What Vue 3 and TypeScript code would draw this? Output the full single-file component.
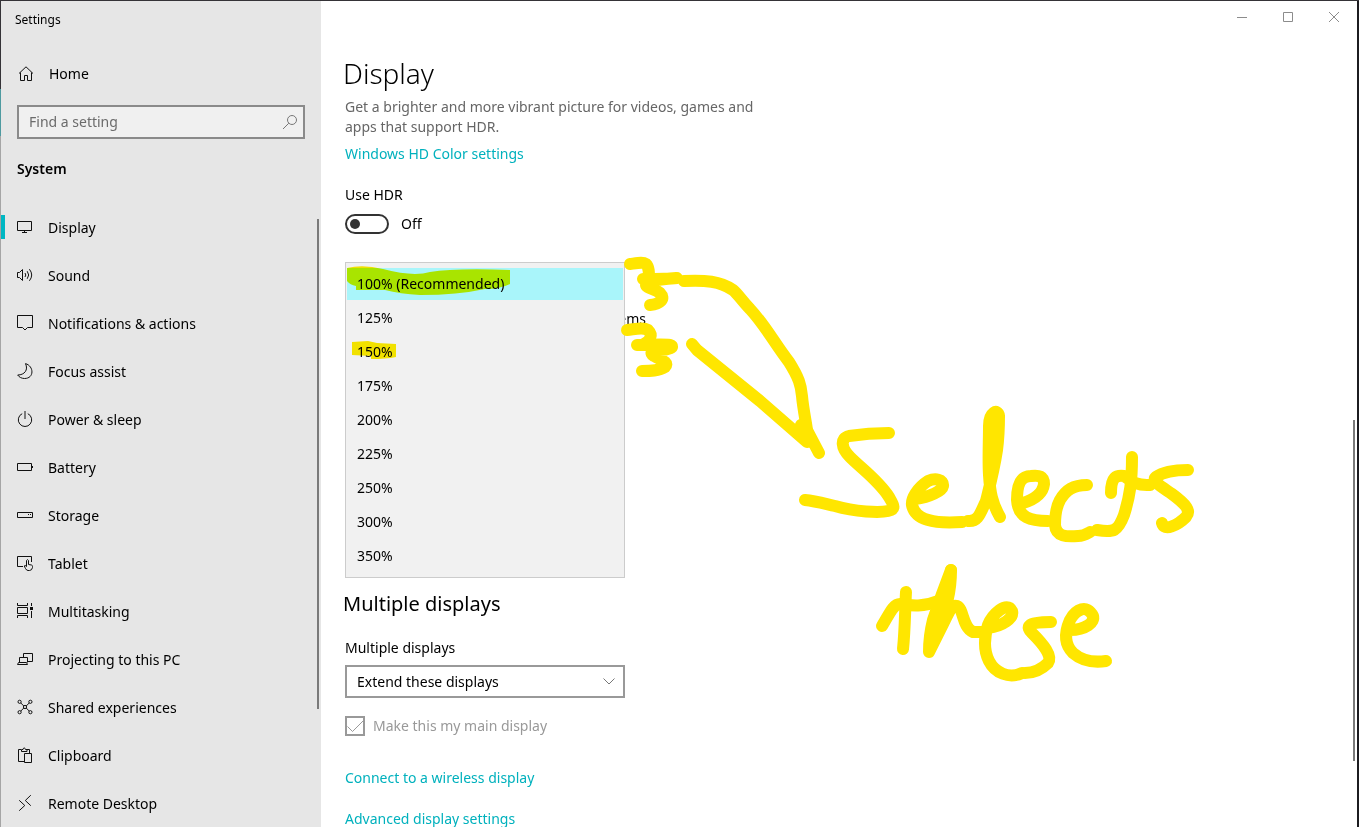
<script setup lang="ts">
import { ref } from 'vue'

interface NavItem {
  label: string
  paths: string[]
  fills?: string[]
}

const navItems: NavItem[] = [
  { label: 'Display', paths: ['M.5 1.5h14v9H.5zM7.5 11v2M5 12.5h5'] },
  {
    label: 'Sound',
    paths: [
      'M.5 4.5h2L5.5 1.5v11L2.5 9.5h-2z',
      'M8 5q1.6 2 0 4M10.2 3.2q3 3.8 0 7.6M12.4 1.2q4.6 5.8 0 11.6'
    ]
  },
  { label: 'Notifications & actions', paths: ['M.5-.5h15v12h-5l-2.500 2.500-2.500-2.500h-5z'] },
  { label: 'Focus assist', paths: ['M8.500-.4C17 2 17.500 14.500 7.500 14.500 4.500 14.500 2 13 .7 11 7.500 11 11.500 6 8.500-.4z'] },
  { label: 'Power & sleep', paths: ['M5.200 1.700a6.700 6.700 0 1 0 5.600 0', 'M8-1v8'] },
  { label: 'Battery', paths: ['M.5 3.500h14v7H.5zM15.500 6v2'] },
  { label: 'Storage', paths: ['M.5 4.500h15v5H.5z'], fills: ['M11 6h1v1h-1zM13 6h1v1h-1z'] },
  {
    label: 'Tablet',
    paths: [
      'M6 10.500H.5V.5h14V6',
      'M9.500 10.500V4.500q1-1.800 2 0v4l3 .5q1 .3 1 1.500v1q-.6 3-3 3h-1.500q-1.500 0-2.500-2l-1.300-2.500q.6-1.500 2.300 .5z'
    ]
  },
  {
    label: 'Multitasking',
    paths: ['M.5-1v2.500h10V-1M.5 3.500h10v6H.5zM.5 14v-2.500h10V14M14.500-1v3M14.500 7v7'],
    fills: ['M13 3h3v3h-3z']
  },
  { label: 'Projecting to this PC', paths: ['M6.500 5V1.500h9v8h-5M2.500 10.500v-5h8v5M1.500 10.500h8l1 2H.5z'] },
  {
    label: 'Shared experiences',
    paths: [
      'M1 1.800a1.600 1.600 0 1 0 3.200 0a1.600 1.600 0 1 0-3.200 0M11.800 1.800a1.600 1.600 0 1 0 3.200 0a1.600 1.600 0 1 0-3.200 0M1 12.200a1.600 1.600 0 1 0 3.200 0a1.600 1.600 0 1 0-3.200 0M11.800 12.200a1.600 1.600 0 1 0 3.200 0a1.600 1.600 0 1 0-3.200 0M6.400 7a1.600 1.600 0 1 0 3.200 0a1.600 1.600 0 1 0-3.200 0',
      'M3.800 3l3 3M12.200 3l-3 3M3.800 11l3-3M12.200 11l-3-3'
    ]
  },
  {
    label: 'Clipboard',
    paths: ['M7 13.500H1.500v-12H4M10 1.500h2.500V5M4.500 3.500v-2h1.500q1-3.500 2.500 0H10v2zM7.500 5.500h7v9h-7z']
  },
  { label: 'Remote Desktop', paths: ['M2.200 4.300l5.600 5.200-5.600 5.200M13.800-.8L8.300 4.500l5.500 5.200'] }
]

const activeItem = ref('Display')
const search = ref('')
const hdr = ref(false)
const scales = ['100% (Recommended)', '125%', '150%', '175%', '200%', '225%', '250%', '300%', '350%']
const scale = ref(scales[0])
const displayModes = ['Extend these displays', 'Duplicate these displays', 'Disconnect this display']
const displayMode = ref(displayModes[0])

const inkStrokes: string[] = [
  'M630 264C638 263 643 262 646 264C649 267 649 272 649 279',
  'M643 279C655 279 668 279 677 278C664 279 650 280 646 285C646 288 655 289 660 293C666 299 660 304 650 305',
  'M684 281C705 280 720 281 733 290C738 294 742 301 750 309C765 325 775 344 789 362C799 378 801 385 802 396C803 408 806 422 807 430',
  'M692 344L697 350L760 401L807 442L801 425L808 432L819 453',
  'M627 330C636 329 643 327 648 330C653 335 651 341 642 345',
  'M637 345C650 345 663 344 670 345C676 347 668 350 660 350C652 350 649 353 654 356C664 361 669 363 665 367C659 371 650 371 642 371',
  'M889 433C875 433 862 434 849 436C840 438 841 448 850 457C862 469 879 481 889 497C893 504 897 509 888 511C880 513 855 512 835 506C822 503 815 501 805 500',
  'M915 499C930 497 942 491 943 486C944 479 935 478 928 481C917 488 911 499 912 505C915 520 933 524 962 522',
  'M968 521C978 522 980 514 986 501C990 485 994 470 997 450C999 435 999 425 999 416C998 408 989 412 989 426C989 442 988 459 989 475C990 492 992 503 1000 517',
  'M1023 503C1036 499 1043 492 1044 484C1044 476 1039 475 1031 476C1020 476 1017 485 1017 500C1018 518 1031 521 1048 521',
  'M1087 485C1073 485 1066 490 1060 500C1055 509 1055 519 1055 525C1056 537 1067 537 1078 536C1085 536 1088 533 1090 532',
  'M1097 530C1114 533 1118 531 1124 515C1130 496 1132 481 1132 457',
  'M1111 493C1111 477 1116 475 1124 476C1130 480 1135 486 1150 485',
  'M1188 470C1173 470 1163 472 1156 477C1151 481 1162 487 1172 494C1187 505 1191 511 1186 517C1178 525 1164 532 1162 523',
  'M882 626C889 615 893 604 900 604C912 606 924 607 938 601',
  'M906 592C905 610 905 630 903 649',
  'M951 570C944 588 938 605 933 620C930 632 929 642 929 652L943 624C948 615 951 604 957 606C964 609 962 627 973 632L983 632',
  'M951 570C951 591 947 608 936 631',
  'M988 628C1003 626 1014 618 1012 611C1007 600 992 615 988 625C984 638 984 651 989 661C995 673 1009 679 1022 673',
  'M1025 673C1036 673 1043 668 1048 663C1053 656 1043 644 1032 633C1026 627 1026 622 1051 622',
  'M1070 630C1086 630 1095 622 1093 616C1087 604 1076 609 1070 620C1063 636 1066 646 1073 653C1081 660 1092 663 1106 661'
]
</script>

<template>
  <div class="window">
    <aside class="sidebar">
      <div class="window-title">Settings</div>
      <button class="home" type="button">
        <svg class="icon" viewBox="0 0 16 16" aria-hidden="true">
          <path d="M1 7.500L8 .8l7 6.700M2.500 6.500v8h4v-5h3v5h4v-8" />
        </svg>
        <span>Home</span>
      </button>
      <div class="search">
        <input v-model="search" type="text" placeholder="Find a setting" aria-label="Find a setting" />
        <svg class="icon search-icon" viewBox="0 0 16 16" aria-hidden="true">
          <path d="M5.500 6a4.500 4.500 0 1 0 9 0a4.500 4.500 0 1 0-9 0M6.800 9.200L1 15" />
        </svg>
      </div>
      <h2 class="group">System</h2>
      <nav class="nav" aria-label="System">
        <button
          v-for="item in navItems"
          :key="item.label"
          type="button"
          class="nav-item"
          :class="{ active: item.label === activeItem }"
          @click="activeItem = item.label"
        >
          <svg class="icon" viewBox="0 0 16 16" aria-hidden="true">
            <path v-for="d in item.paths" :key="d" :d="d" />
            <path v-for="d in item.fills" :key="d" :d="d" class="solid" />
          </svg>
          <span>{{ item.label }}</span>
        </button>
        <div class="nav-thumb"></div>
      </nav>
    </aside>

    <main class="main">
      <div class="controls">
        <button type="button" aria-label="Minimize">
          <svg viewBox="0 0 10 10"><path d="M0 5.500h10" /></svg>
        </button>
        <button type="button" aria-label="Maximize">
          <svg viewBox="0 0 10 10"><path d="M.5.5h9v9h-9z" /></svg>
        </button>
        <button type="button" aria-label="Close">
          <svg viewBox="0 0 10 10"><path d="M0 0l10 10M10 0L0 10" /></svg>
        </button>
      </div>

      <div class="content">
        <h1>Display</h1>
        <p class="intro">Get a brighter and more vibrant picture for videos, games and apps that support HDR.</p>
        <a class="link" href="#hd-color">Windows HD Color settings</a>

        <label class="hdr-label" for="hdr">Use HDR</label>
        <div class="switch-row">
          <input id="hdr" v-model="hdr" class="switch" type="checkbox" role="switch" />
          <span>{{ hdr ? 'On' : 'Off' }}</span>
        </div>

        <div class="scale">
          <label for="scale">Change the size of text, apps, and other items</label>
          <select id="scale" v-model="scale" class="scale-list" size="9">
            <option v-for="s in scales" :key="s" :value="s">{{ s }}</option>
          </select>
        </div>

        <h2 class="section">Multiple displays</h2>
        <label class="field-label" for="mode">Multiple displays</label>
        <div class="combo">
          <select id="mode" v-model="displayMode">
            <option v-for="m in displayModes" :key="m" :value="m">{{ m }}</option>
          </select>
          <svg viewBox="0 0 12 7" aria-hidden="true"><path d="M.5.5L6 6l5.500-5.500" /></svg>
        </div>
        <label class="check">
          <input type="checkbox" checked disabled />
          <svg viewBox="0 0 20 20" aria-hidden="true"><path d="M2.500 10.500l5 5L18 5" /></svg>
          <span>Make this my main display</span>
        </label>
        <a class="link wireless" href="#wireless">Connect to a wireless display</a>
        <a class="link" href="#advanced">Advanced display settings</a>
      </div>
      <div class="main-thumb"></div>
    </main>

    <svg class="overlay highlighter" viewBox="0 0 1359 827" aria-hidden="true">
      <path d="M347 268Q363 264 383 269Q413 277 430 272Q455 268 510 270V284Q500 289 485 289Q458 295 420 295Q400 294 385 290L356 290V286Q350 285 347 281z" />
      <path d="M352 342L368 341L377 343L396 344V357Q386 359 371 359V356L352 355z" />
    </svg>
    <svg class="overlay ink" viewBox="0 0 1359 827" role="img" aria-label="Selects these">
      <path v-for="d in inkStrokes" :key="d" :d="d" />
    </svg>
  </div>
</template>

<style>
body {
  margin: 0;
  overflow: hidden;
}
</style>

<style scoped>
.window {
  position: relative;
  box-sizing: border-box;
  display: flex;
  height: 100vh;
  overflow: hidden;
  padding: 1px 2px 0 1px;
  background: linear-gradient(#353337, #353337) top / 100% 1px no-repeat,
    linear-gradient(#1c1c20, #1c1c20) right / 2px 100% no-repeat,
    linear-gradient(#353337 89px, #4e9aa0 89px, #4e9aa0 136px, #a5a5a5 136px);
  color: #000;
  font: 14px/20px "Noto Sans", "Open Sans", sans-serif;
}
button,
input,
select {
  font: inherit;
  color: inherit;
}
h1,
h2,
p {
  margin: 0;
}
.sidebar {
  flex: 0 0 320px;
  display: flex;
  flex-direction: column;
  background: #e6e6e6;
}
.window-title {
  padding: 9px 14px 0;
  font-size: 12px;
}
.home,
.nav-item {
  display: flex;
  align-items: center;
  flex: none;
  border: 0;
  background: none;
  text-align: left;
}
.home {
  gap: 15px;
  height: 40px;
  margin-top: 24px;
  padding: 0 17px;
}
.icon {
  flex: none;
  width: 16px;
  height: 16px;
  overflow: visible;
  fill: none;
  stroke: #111;
  stroke-width: 1px;
}
.icon .solid {
  fill: #111;
  stroke: none;
}
.search {
  display: flex;
  align-items: center;
  box-sizing: border-box;
  flex: 0 0 34px;
  margin: 11px 16px 0;
  padding: 0 5px 0 10px;
  border: 2px solid #8a8a8a;
  background: #f0f0f0;
}
.search input {
  flex: 1;
  min-width: 0;
  padding: 0;
  border: 0;
  outline: 0;
  background: none;
}
.search input::placeholder {
  color: #6b6b6b;
  opacity: 1;
}
.search .search-icon {
  stroke: #777;
}
.group {
  margin: 20px 16px 0;
  font-size: 14px;
  line-height: 20px;
  font-weight: 600;
}
.nav {
  position: relative;
  display: flex;
  flex-direction: column;
  margin-top: 25px;
}
.nav-item {
  position: relative;
  gap: 15px;
  height: 48px;
  padding: 0 16px;
}
.nav-item.active::before {
  content: "";
  position: absolute;
  left: 0;
  top: 11px;
  width: 4px;
  height: 24px;
  background: #00b7c3;
}
.nav-thumb {
  position: absolute;
  right: 2px;
  top: 15px;
  width: 2px;
  height: 490px;
  background: #7a7a7a;
}
.main {
  position: relative;
  flex: 1;
  min-width: 0;
  background: #fff;
}
.controls {
  display: flex;
  justify-content: flex-end;
}
.controls button {
  display: grid;
  place-items: center;
  width: 46px;
  height: 32px;
  padding: 0;
  border: 0;
  background: none;
}
.controls svg {
  width: 10px;
  height: 10px;
  fill: none;
  stroke: #8c8c8c;
}
.content {
  display: flex;
  flex-direction: column;
  align-items: flex-start;
  max-width: 424px;
  padding-left: 24px;
}
h1 {
  margin: 20px 0 0 -2px;
  font-size: 28px;
  line-height: 40px;
  font-weight: 300;
}
.intro {
  margin-top: 4px;
  color: #666;
}
.link {
  margin-top: 7px;
  color: #00b1bd;
  text-decoration: none;
}
.hdr-label {
  margin-top: 21px;
}
.switch-row {
  display: flex;
  align-items: center;
  gap: 12px;
  margin-top: 9px;
}
.switch {
  appearance: none;
  display: flex;
  align-items: center;
  box-sizing: border-box;
  width: 44px;
  height: 20px;
  margin: 0;
  padding: 0 3px;
  border: 2px solid #333;
  border-radius: 10px;
}
.switch::before {
  content: "";
  width: 10px;
  height: 10px;
  border-radius: 50%;
  background: #333;
}
.switch:checked {
  justify-content: flex-end;
}
.scale {
  position: relative;
  box-sizing: border-box;
  width: 280px;
  height: 316px;
  margin-top: 28px;
  padding-top: 47px;
  white-space: nowrap;
}
.scale-list {
  appearance: none;
  position: absolute;
  inset: 0;
  box-sizing: border-box;
  width: 100%;
  height: 100%;
  margin: 0;
  padding: 5px 1px 0;
  overflow: hidden;
  border: 1px solid #ccc;
  border-radius: 0;
  outline: 0;
  background: #f1f1f1;
}
.scale-list option {
  min-height: 20px;
  margin-bottom: 2px;
  padding: 6px 10px;
  line-height: 20px;
  color: #000;
}
.scale-list option:checked {
  background: linear-gradient(#a9f5fa, #a9f5fa);
  color: #000;
}
.section {
  margin: 12px 0 0 -2px;
  font-size: 20px;
  line-height: 28px;
  font-weight: 400;
}
.field-label {
  margin-top: 20px;
}
.combo {
  position: relative;
  width: 280px;
  margin-top: 7px;
}
.combo select {
  appearance: none;
  box-sizing: border-box;
  width: 100%;
  height: 33px;
  padding: 0 10px;
  border: 2px solid #999;
  border-radius: 0;
  background: #fff;
}
.combo svg {
  position: absolute;
  right: 10px;
  top: 13px;
  width: 12px;
  height: 7px;
  fill: none;
  stroke: #777;
}
.check {
  position: relative;
  display: flex;
  align-items: center;
  gap: 8px;
  margin-top: 18px;
  color: #999;
}
.check input {
  appearance: none;
  box-sizing: border-box;
  width: 20px;
  height: 20px;
  margin: 0;
  border: 2px solid #999;
}
.check svg {
  position: absolute;
  left: 0;
  top: 0;
  width: 20px;
  height: 20px;
  fill: none;
  stroke: #999;
}
.wireless {
  margin: 32px 0 14px;
}
.main-thumb {
  position: absolute;
  right: 2px;
  top: 419px;
  width: 2px;
  height: 341px;
  background: #7a7a7a;
}
.overlay {
  position: absolute;
  left: 0;
  top: 0;
  width: 1359px;
  height: 827px;
  pointer-events: none;
}
.highlighter {
  fill: #ffee00;
  mix-blend-mode: multiply;
}
.ink {
  fill: none;
  stroke: #ffe600;
  stroke-width: 12px;
  stroke-linecap: round;
  stroke-linejoin: round;
}
</style>
